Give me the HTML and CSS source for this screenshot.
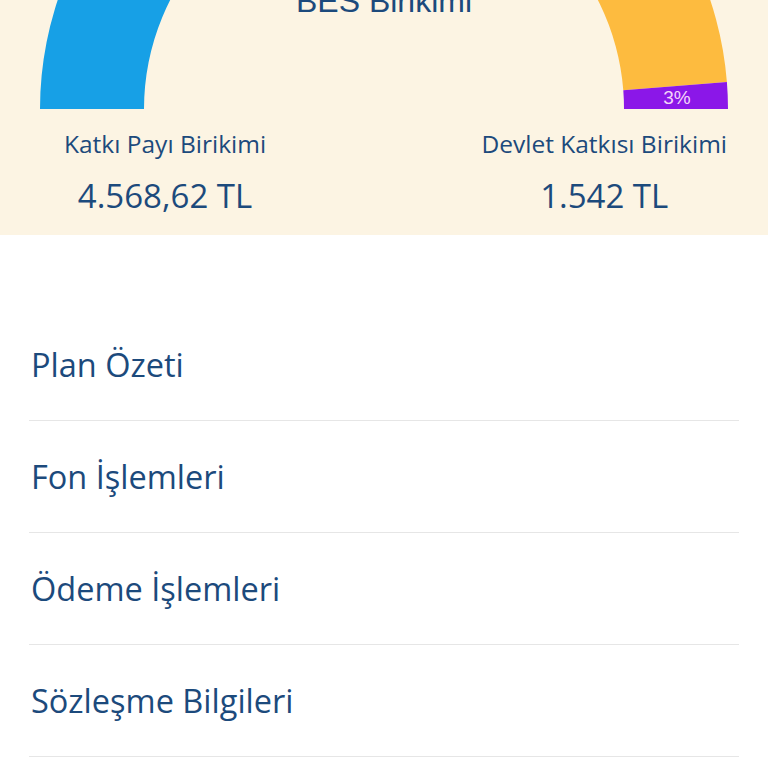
FILE: index.html
```html
<!DOCTYPE html>
<html lang="tr">
<head>
<meta charset="utf-8">
<link rel="stylesheet" href="styles.css">
</head>
<body>
<section class="summary">
  <svg class="gauge" width="768" height="110" viewBox="0 0 768 110">
    <path class="seg-blue" d="M40 109 A344 344 0 0 1 384 -235 L384 -131 A240 240 0 0 0 144 109 Z"/>
    <path class="seg-yellow" d="M384 -235 A344 344 0 0 1 726.9 82 L623.3 90.2 A240 240 0 0 0 384 -131 Z"/>
    <path class="seg-purple" d="M726.9 82 A344 344 0 0 1 728 109 L624 109 A240 240 0 0 0 623.3 90.2 Z"/>
    <text class="gauge-title" x="384" y="12" text-anchor="middle">BES Birikimi</text>
    <text class="gauge-pct" x="677" y="104" text-anchor="middle">3%</text>
  </svg>
  <div class="stats">
    <div class="stat">
      <div class="stat-label">Katkı Payı Birikimi</div>
      <div class="stat-value">4.568,62 TL</div>
    </div>
    <div class="stat">
      <div class="stat-label">Devlet Katkısı Birikimi</div>
      <div class="stat-value">1.542 TL</div>
    </div>
  </div>
</section>
<nav class="menu">
  <div class="menu-item">Plan Özeti</div>
  <div class="menu-item">Fon İşlemleri</div>
  <div class="menu-item">Ödeme İşlemleri</div>
  <div class="menu-item">Sözleşme Bilgileri</div>
</nav>
</body>
</html>
```
FILE: styles.css
```css
html, body {
  margin: 0;
  padding: 0;
  background: #ffffff;
}
body {
  width: 768px;
  height: 768px;
  overflow: hidden;
  font-family: "Open Sans", "Noto Sans", sans-serif;
  color: #1c4a7c;
}
.summary {
  background: #fcf4e3;
  height: 235px;
}
.gauge {
  display: block;
}
.seg-blue { fill: #17a0e6; }
.seg-yellow { fill: #fdbb3f; }
.seg-purple { fill: #8b17e8; }
.gauge-title {
  font-family: "Liberation Sans", Arial, sans-serif;
  font-size: 32px;
  fill: #1c4a7c;
}
.gauge-pct {
  font-family: "Liberation Sans", Arial, sans-serif;
  font-size: 19px;
  fill: #f4d4f8;
}
.stats {
  display: flex;
  justify-content: space-between;
  padding: 18px 41px 0 64px;
}
.stat {
  display: flex;
  flex-direction: column;
  align-items: center;
}
.stat-label {
  font-size: 24.5px;
  line-height: 32px;
}
.stat-value {
  font-size: 33px;
  line-height: 40px;
  margin-top: 16px;
  font-weight: 500;
}
.menu {
  padding: 74px 29px 0 29px;
}
.menu-item {
  height: 111px;
  border-bottom: 1px solid #e6e6e6;
  display: flex;
  align-items: center;
  padding-left: 2px;
  font-size: 32.5px;
  font-weight: 500;
}
```
